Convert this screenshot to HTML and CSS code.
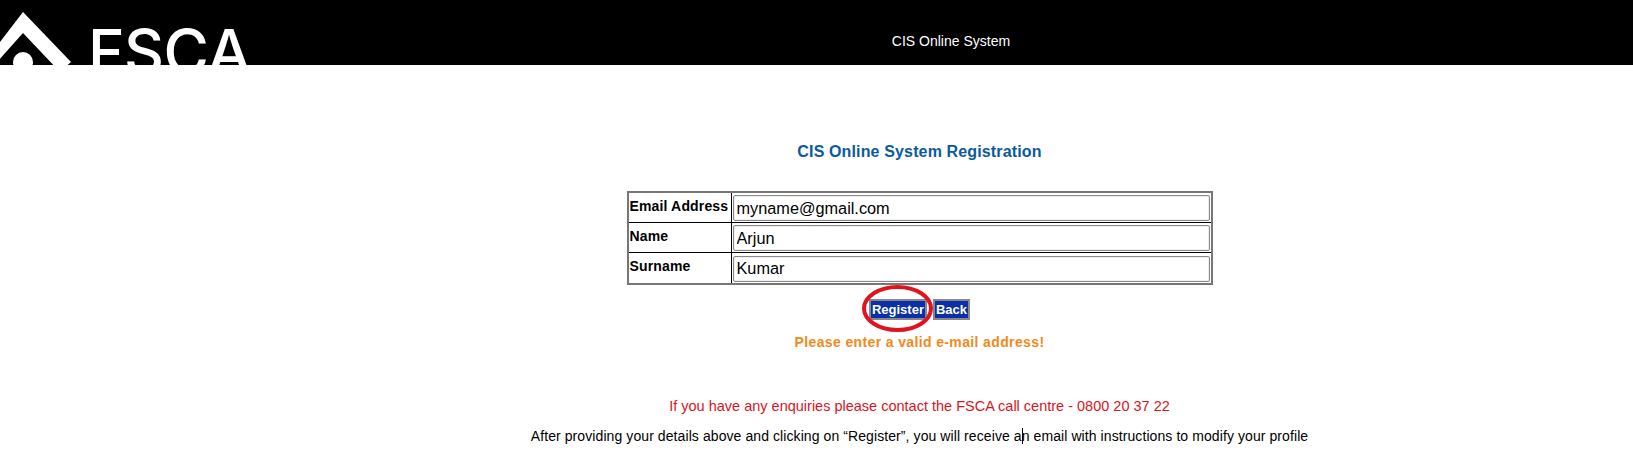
FILE: index.html
```html
<!DOCTYPE html>
<html lang="en">
<head>
<meta charset="utf-8">
<title>CIS Online System Registration</title>
<link rel="stylesheet" href="styles.css">
</head>
<body>
<header class="top">
  <div class="brand">
    <svg class="mark" width="76" height="65" viewBox="0 0 76 65" aria-hidden="true">
      <path d="M-10 55 L23 12 L71 62 L60 72 L23 33 L-10 70 Z" fill="#fff"/>
      <circle cx="23" cy="62" r="10" fill="#fff"/>
    </svg>
    <span class="brand-name">FSCA</span>
  </div>
  <div class="system-name">CIS Online System</div>
</header>
<main class="content">
  <h1 class="title">CIS Online System Registration</h1>
  <table class="form-table">
    <tr>
      <th class="label">Email Address</th>
      <td class="field"><input class="text-input" type="text" value="myname@gmail.com"></td>
    </tr>
    <tr>
      <th class="label">Name</th>
      <td class="field"><input class="text-input" type="text" value="Arjun"></td>
    </tr>
    <tr>
      <th class="label">Surname</th>
      <td class="field"><input class="text-input" type="text" value="Kumar"></td>
    </tr>
  </table>
  <div class="actions">
    <span class="highlight">
      <button class="btn" type="button">Register</button>
      <svg class="ring" width="71" height="47" viewBox="0 0 71 47" aria-hidden="true">
        <ellipse cx="35.5" cy="23.5" rx="33.5" ry="21.5" fill="none" stroke="#e0141e" stroke-width="4"/>
      </svg>
    </span>
    <button class="btn" type="button">Back</button>
  </div>
  <p class="error">Please enter a valid e-mail address!</p>
  <p class="contact">If you have any enquiries please contact the FSCA call centre - 0800 20 37 22</p>
  <p class="note">After providing your details above and clicking on “Register”, you will receive a<span class="caret"></span>n email with instructions to modify your profile</p>
</main>
</body>
</html>
```
FILE: styles.css
```css
* { box-sizing: border-box; }
html, body { margin: 0; padding: 0; background: #fff; }
body { font-family: "Liberation Sans", Arial, sans-serif; color: #000; overflow: hidden; height: 467px; }

.top {
  height: 65px;
  background: #000;
  display: flex;
  overflow: hidden;
  color: #fff;
}
.brand {
  width: 700px;
  height: 65px;
  display: flex;
  flex: none;
  overflow: hidden;
}
.mark { flex: none; display: block; }
.brand-name {
  font-family: "Inter", "Liberation Sans", sans-serif;
  font-size: 62px;
  font-weight: 500;
  line-height: 1;
  margin: 21px 0 0 12px;
  letter-spacing: -0.5px;
}
.system-name {
  width: 502px;
  text-align: center;
  font-size: 14px;
  line-height: 16px;
  padding-top: 33px;
}

.content {
  margin-left: 206px;
  display: flex;
  flex-direction: column;
  align-items: center;
}
.title {
  margin: 77px 0 0;
  font-size: 16px;
  line-height: 20px;
  font-weight: 700;
  letter-spacing: 0.14px;
  color: #0b5a9e;
}
.form-table {
  width: 586px;
  margin-top: 29px;
  border-collapse: separate;
  border-spacing: 0;
  border: 2px solid #777;
}
.label {
  width: 103px;
  height: 30px;
  padding: 0 0 4px 1px;
  font-size: 14px;
  font-weight: 700;
  letter-spacing: 0.15px;
  text-align: left;
  white-space: nowrap;
  border-right: 1px solid #000;
  border-bottom: 1px solid #000;
}
.field {
  padding: 2px 1px 1px;
  border-bottom: 1px solid #000;
}
tr:last-child .label, tr:last-child .field { border-bottom: 0; }
.text-input {
  display: block;
  width: 100%;
  height: 26px;
  padding: 0 3px;
  border: 1px solid #8a8a8a;
  border-radius: 2px;
  box-shadow: inset 0 0 0 1px #eee;
  font-family: "Liberation Sans", Arial, sans-serif;
  font-size: 16.3px;
  color: #000;
  background: #fff;
  outline: none;
}

.actions {
  display: flex;
  gap: 6px;
  align-items: center;
  margin-top: 14px;
  height: 21px;
}
.highlight { position: relative; display: block; }
.btn {
  display: block;
  height: 21px;
  padding: 0 1px;
  background: #0a2fa8;
  color: #fff;
  border: 2px solid #888;
  font-family: "Liberation Sans", Arial, sans-serif;
  font-size: 13px;
  font-weight: 700;
  line-height: 17px;
}
.ring { position: absolute; left: -7px; top: -14px; display: block; }
.error {
  margin: 14px 0 0;
  font-size: 14px;
  line-height: 16px;
  font-weight: 700;
  letter-spacing: 0.37px;
  color: #f28a1b;
}
.contact {
  margin: 48px 0 0;
  font-size: 14.5px;
  line-height: 16px;
  color: #d9141c;
}
.note {
  margin: 14px 0 0;
  font-size: 14px;
  line-height: 16px;
  letter-spacing: 0.085px;
  color: #000;
}
.caret { position: relative; }
.caret::after {
  content: "";
  position: absolute;
  left: 0;
  top: 0;
  width: 1px;
  height: 16px;
  background: #000;
}
```
